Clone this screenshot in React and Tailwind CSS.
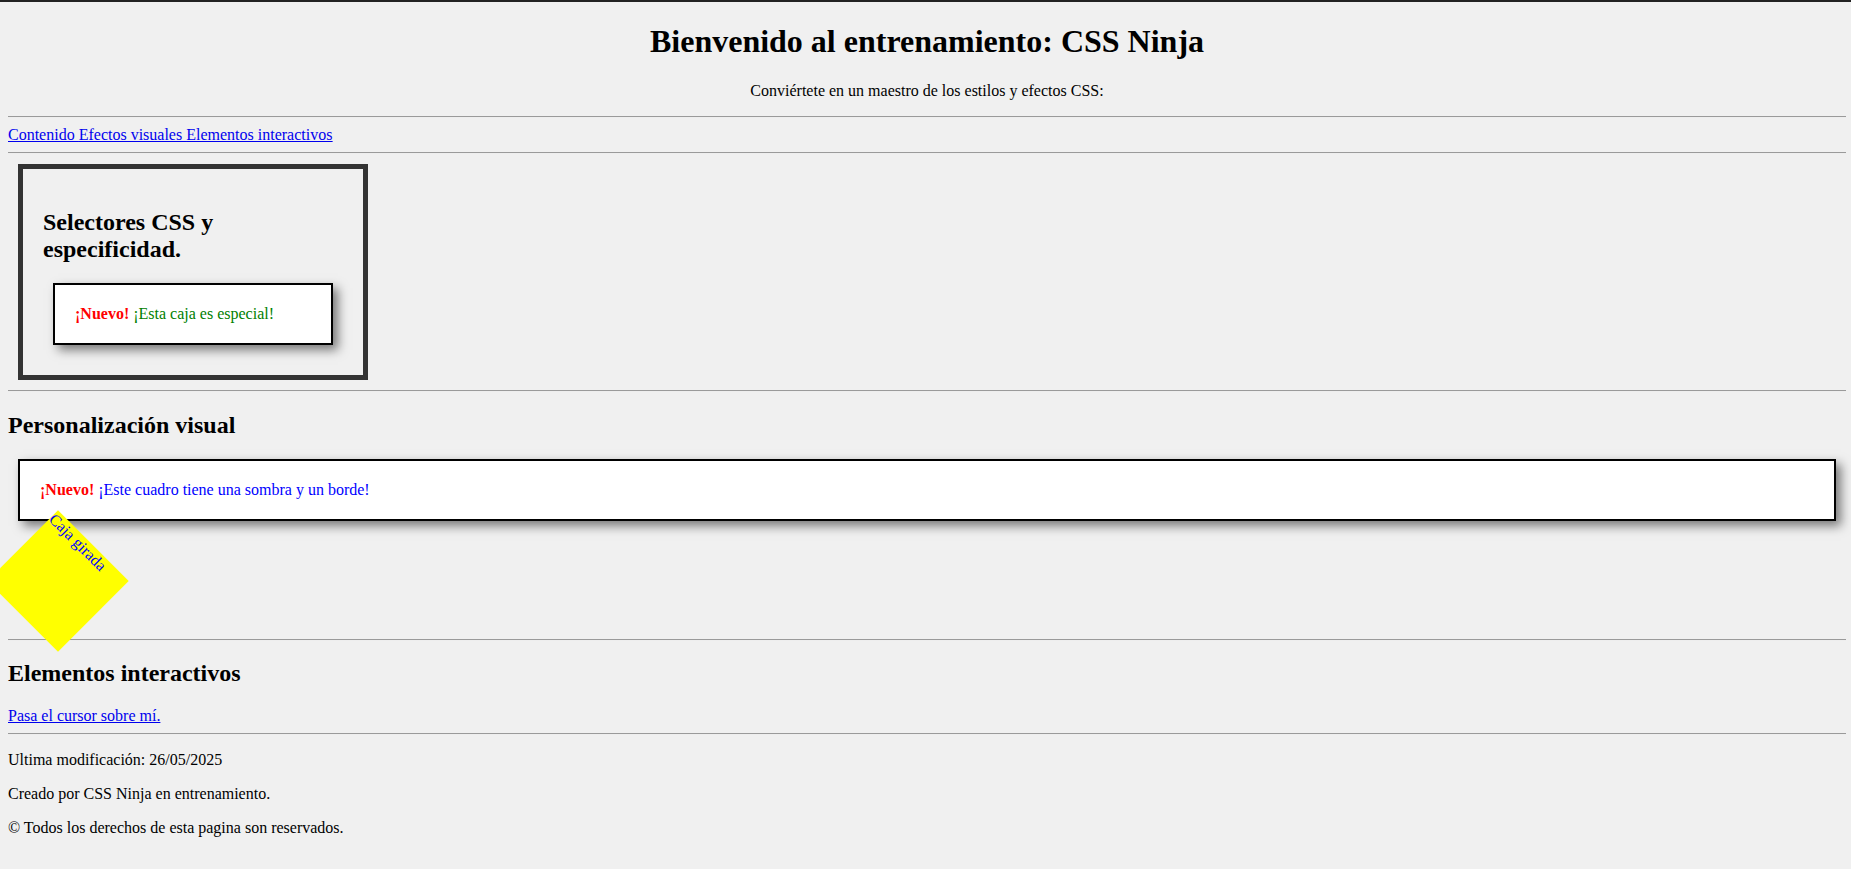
export default function App() {
    return (
        <div className="min-h-screen border-t-2 border-[#222] bg-[#f0f0f0] font-['Liberation_Serif',serif] text-base leading-[normal] text-black">
            <div className="pb-2 pl-2 pr-[5px]">
                <h1 className="mt-[21.44px] mb-[21.44px] text-center text-[32px] font-bold">
                    Bienvenido al entrenamiento: CSS Ninja
                </h1>
                <p className="my-4 text-center">Conviértete en un maestro de los estilos y efectos CSS:</p>

                <hr className="my-2 border-t border-b border-t-[#9a9a9a] border-b-[#eeeeee]" />
                <nav className="text-[#0000ee] underline">
                    <a href="#contenido">Contenido </a>
                    <a href="#efectos">Efectos visuales </a>
                    <a href="#interactivos">Elementos interactivos</a>
                </nav>
                <hr className="my-2 border-t border-b border-t-[#9a9a9a] border-b-[#eeeeee]" />

                {/* Contenido */}
                <section id="contenido" className="m-[10px] w-[350px] border-[5px] border-[#333] p-5">
                    <h2 className="my-[19.92px] text-[24px] font-bold">Selectores CSS y especificidad.</h2>
                    <div className="m-[10px] border-2 border-black bg-white p-5 shadow-[5px_5px_10px_rgba(0,0,0,0.5)]">
                        <span className="font-bold text-[#ff0000]">¡Nuevo!</span>{' '}
                        <span className="text-[#008000]">¡Esta caja es especial!</span>
                    </div>
                </section>

                <hr className="my-2 border-t border-b border-t-[#9a9a9a] border-b-[#eeeeee]" />

                {/* Efectos visuales */}
                <section id="efectos">
                    <h2 className="my-[19.92px] text-[24px] font-bold">Personalización visual</h2>
                    <div className="m-[10px] border-2 border-black bg-white p-5 shadow-[5px_5px_10px_rgba(0,0,0,0.5)]">
                        <span className="font-bold text-[#ff0000]">¡Nuevo!</span>{' '}
                        <span className="text-[#0000ff]">¡Este cuadro tiene una sombra y un borde!</span>
                    </div>
                    <div className="mt-[10px] size-[100px] rotate-45 bg-[#ffff00] text-[#0000ff]">Caja girada</div>
                </section>

                <hr className="my-2 border-t border-b border-t-[#9a9a9a] border-b-[#eeeeee]" />

                {/* Elementos interactivos */}
                <section id="interactivos">
                    <h2 className="my-[19.92px] text-[24px] font-bold">Elementos interactivos</h2>
                    <a href="#" className="text-[#0000ee] underline">Pasa el cursor sobre mí.</a>
                </section>

                <hr className="my-2 border-t border-b border-t-[#9a9a9a] border-b-[#eeeeee]" />

                <footer>
                    <p className="my-4">Ultima modificación: 26/05/2025</p>
                    <p className="my-4">Creado por CSS Ninja en entrenamiento.</p>
                    <p className="my-4">© Todos los derechos de esta pagina son reservados.</p>
                </footer>
            </div>
        </div>
    );
}
